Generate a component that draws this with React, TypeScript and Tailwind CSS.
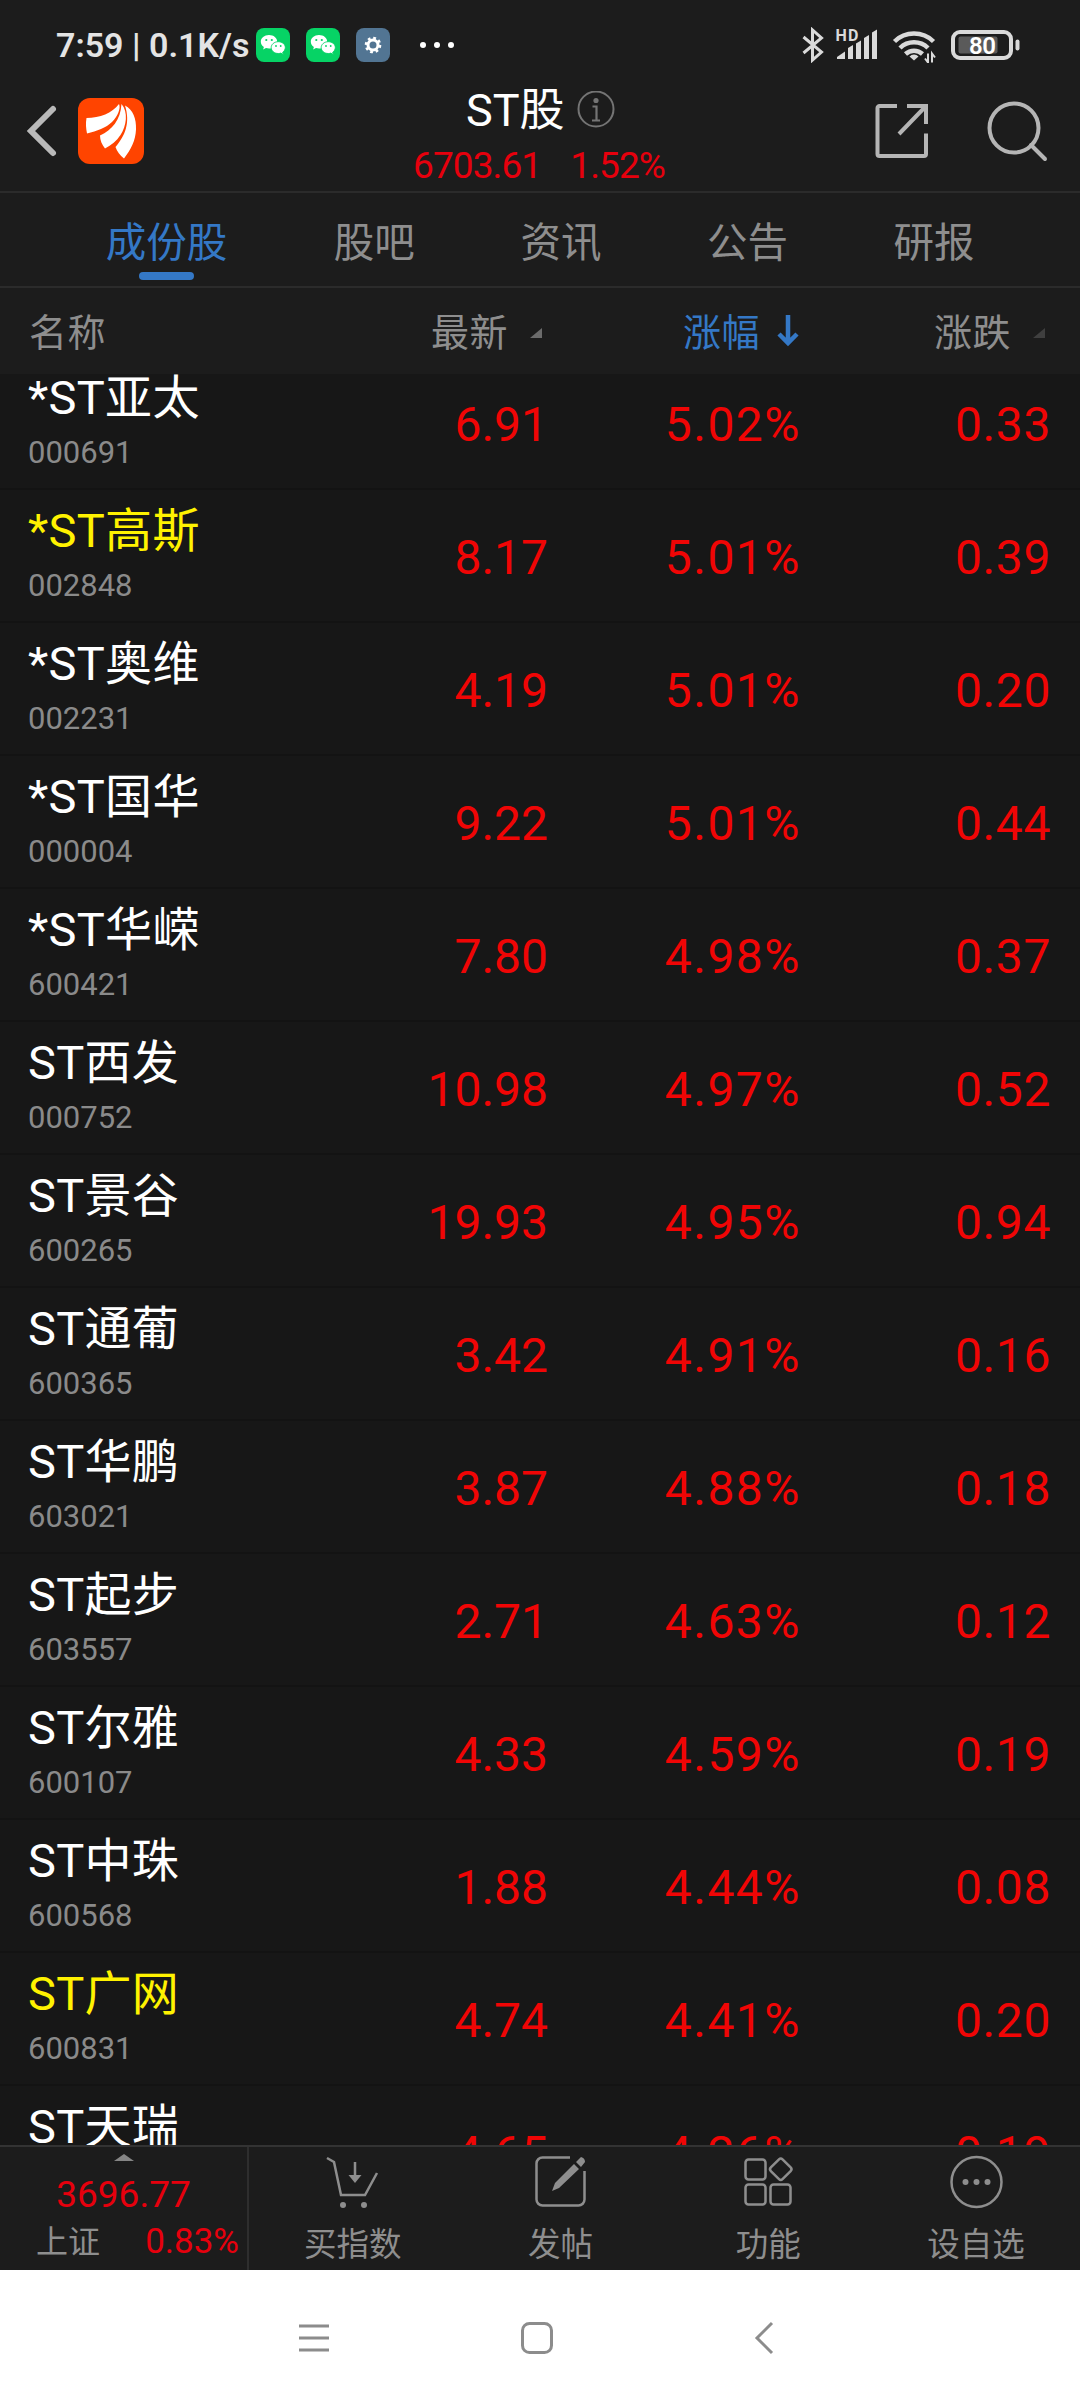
import type { ReactNode } from "react";

interface Stock {
  name: string;
  code: string;
  price: string;
  pct: string;
  change: string;
  starred?: boolean;
}

const STOCKS: Stock[] = [
  { name: "*ST亚太", code: "000691", price: "6.91", pct: "5.02%", change: "0.33" },
  { name: "*ST高斯", code: "002848", price: "8.17", pct: "5.01%", change: "0.39", starred: true },
  { name: "*ST奥维", code: "002231", price: "4.19", pct: "5.01%", change: "0.20" },
  { name: "*ST国华", code: "000004", price: "9.22", pct: "5.01%", change: "0.44" },
  { name: "*ST华嵘", code: "600421", price: "7.80", pct: "4.98%", change: "0.37" },
  { name: "ST西发", code: "000752", price: "10.98", pct: "4.97%", change: "0.52" },
  { name: "ST景谷", code: "600265", price: "19.93", pct: "4.95%", change: "0.94" },
  { name: "ST通葡", code: "600365", price: "3.42", pct: "4.91%", change: "0.16" },
  { name: "ST华鹏", code: "603021", price: "3.87", pct: "4.88%", change: "0.18" },
  { name: "ST起步", code: "603557", price: "2.71", pct: "4.63%", change: "0.12" },
  { name: "ST尔雅", code: "600107", price: "4.33", pct: "4.59%", change: "0.19" },
  { name: "ST中珠", code: "600568", price: "1.88", pct: "4.44%", change: "0.08" },
  { name: "ST广网", code: "600831", price: "4.74", pct: "4.41%", change: "0.20", starred: true },
  { name: "ST天瑞", code: "300165", price: "4.65", pct: "4.26%", change: "0.19" },
];

export default function App() {
  return (
    <div className="flex h-[2400px] w-[1080px] flex-col overflow-hidden bg-[#1c1c1c] font-['Roboto','Noto_Sans_CJK_SC',sans-serif] text-[#8e8e8e]">
      <StatusBar />
      <Header />
      <Tabs />
      <ColumnHeader />
      <main className="h-[1771px] shrink-0 overflow-hidden bg-[#171717]">
        <div className="-mt-[17px]">
          {STOCKS.map((stock) => (
            <StockRow key={stock.code} stock={stock} />
          ))}
        </div>
      </main>
      <BottomBar />
      <SystemNav />
    </div>
  );
}

function StatusBar() {
  return (
    <div className="flex h-[90px] shrink-0 items-center pl-[56px] text-[#e4e4e4]">
      <span className="w-[200px] whitespace-nowrap text-[34px] leading-none font-semibold">
        7:59 | 0.1K/s
      </span>
      <WeChatIcon />
      <WeChatIcon />
      <svg className="size-[34px]" viewBox="0 0 34 34">
        <rect width="34" height="34" rx="8" fill="#527593" />
        <circle cx="17" cy="17" r="5" fill="none" stroke="#fff" strokeWidth="3" />
        <circle cx="17" cy="17" r="7" fill="none" stroke="#fff" strokeWidth="2.6" strokeDasharray="2.75 2.75" />
      </svg>
      <svg className="ml-[30px] h-[6px] w-[34px]" viewBox="0 0 34 6" fill="#fff">
        <circle cx="3" cy="3" r="3" />
        <circle cx="17" cy="3" r="3" />
        <circle cx="31" cy="3" r="3" />
      </svg>

      {/* Bluetooth, mobile signal, wifi, battery */}
      <svg className="ml-[347px] h-[36px] w-[222px]" viewBox="0 0 222 36" fill="none">
        <path d="M2.500 10l18 15-9 8V3l9 8-18 15" stroke="#dadada" strokeWidth="3" />
        <text x="34.500" y="14" fontSize="16" fontWeight="700" fill="#dadada" textLength="23">HD</text>
        <g fill="#dadada">
          <path d="M36 32v-2l8-5.500v7.500z" />
          <path d="M47 32V21l5-3v14z" />
          <path d="M55 32V16.500l5-3V32z" />
          <path d="M63 32V11l5-3v24z" />
          <path d="M71 32V5.500l5-3V32z" />
        </g>
        <g stroke="#dadada" strokeWidth="4.500">
          <path d="M93.500 14.500a28 28 0 0 1 39 0" />
          <path d="M99 21a20 20 0 0 1 28 0" />
          <path d="M104.500 27a12.500 12.500 0 0 1 17 0" />
        </g>
        <path d="M113 33.500l-4.500-4a6 6 0 0 1 9 0z" fill="#dadada" />
        <path d="M127 26.500v9l-3-4M131 35.500v-9l3 4" stroke="#dadada" strokeWidth="2" />
        <rect x="152" y="5" width="58" height="26" rx="7" stroke="#dadada" strokeWidth="4" />
        <rect x="157.500" y="9.500" width="39" height="17" rx="2" fill="#5a5a5a" />
        <text x="168" y="26.500" fontSize="24" fontWeight="600" fill="#fff" textLength="27">80</text>
        <path d="M216.500 14.500v7" stroke="#dadada" strokeWidth="4" strokeLinecap="round" />
      </svg>
    </div>
  );
}

function WeChatIcon() {
  return (
    <svg className="mr-4 size-[34px]" viewBox="0 0 34 34">
      <rect width="34" height="34" rx="8" fill="#06d365" />
      <path d="M13 7c-4.700 0-8.200 3-8.200 6.700 0 2.200 1.200 4 3.100 5.300l-.8 2.600 2.900-1.600c1 .3 2 .5 3 .5 4.700 0 8.200-3 8.200-6.800S17.700 7 13 7z" fill="#fff" />
      <path d="M22.300 13.700c-4 0-7.100 2.600-7.100 5.900s3.100 5.900 7.100 5.900c.9 0 1.700-.1 2.500-.4l2.600 1.400-.7-2.300c1.600-1.100 2.600-2.700 2.600-4.600 0-3.300-3-5.900-7-5.900z" fill="#fff" stroke="#06d365" strokeWidth=".9" />
      <g fill="#06d365">
        <circle cx="10.300" cy="12" r="1.100" />
        <circle cx="15.800" cy="12" r="1.100" />
        <circle cx="20" cy="18" r=".9" />
        <circle cx="24.700" cy="18" r=".9" />
      </g>
    </svg>
  );
}

function Header() {
  return (
    <header className="flex h-[103px] shrink-0 border-b-2 border-[#2b2b2b]">
      <div className="flex w-[410px] items-start">
        <svg className="mt-[14px] ml-[26px] h-[54px] w-[32px]" viewBox="0 0 32 54" fill="none">
          <path d="M27 5L5 27l22 22" stroke="#b9b9b9" strokeWidth="6" strokeLinecap="round" />
        </svg>
        <svg className="mt-2 ml-[20px] size-[66px]" viewBox="0 0 66 66">
          <rect width="66" height="66" rx="12" fill="#ff4400" />
          <g fill="#fff">
            <path d="M8.500 20C22 20 34 15 41 6c2 4-1 12-7 18-6 6-15 9-25 11.500-1-5-1.500-10-.5-15.500z" />
            <path d="M22 37.500C34 32 42.500 22 43.500 6c7 8 5 22-1 31-4 6-9 10-15.500 13.500-3-4-5-8-5-13z" />
            <path d="M47 7.500c8 4 11.500 13 11 24-.5 11-5 20-12 29-4-3-7-7-8.500-11.500C47 38 52.500 25 47 7.500z" />
          </g>
        </svg>
      </div>

      <div className="w-[260px]">
        <div className="flex h-[40px] items-center pl-[56px] text-[45px] leading-none text-white">
          <span className="whitespace-nowrap">ST股</span>
          <svg className="ml-[12px] size-[38px]" viewBox="0 0 38 38" fill="none" stroke="#747474">
            <circle cx="19" cy="18" r="17.500" strokeWidth="2" />
            <path d="M15.500 15.500h4v14M15 29.500h8" strokeWidth="2.200" />
            <circle cx="19" cy="9.500" r="2.600" fill="#747474" stroke="none" />
          </svg>
        </div>
        <div className="mt-[17px] flex justify-between pr-[5px] pl-[3px] text-[37px] leading-none tracking-[-0.9px] text-[#e6000d]">
          <span>6703.61</span>
          <span>1.52%</span>
        </div>
      </div>

      <svg className="mt-[12px] ml-[204px] size-[56px]" viewBox="0 0 56 56" fill="none" stroke="#b5b5b5" strokeWidth="4">
        <path d="M23 4H5.500A2 2 0 0 0 3.500 6v46a2 2 0 0 0 2 2H50a2 2 0 0 0 2-2V31.500" />
        <path d="M33 4h19v18M52 4L25 32" />
      </svg>
      <svg className="mt-[11px] ml-[57px] size-[62px]" viewBox="0 0 62 62" fill="none" stroke="#b5b5b5" strokeWidth="4">
        <circle cx="27" cy="27" r="24.500" />
        <path d="M44 44l14 14" strokeLinecap="round" />
      </svg>
    </header>
  );
}

function Tabs() {
  const others = ["股吧", "资讯", "公告", "研报"];

  return (
    <nav className="flex h-[95px] shrink-0 border-b-2 border-[#2b2b2b] pl-[73px] text-[40.5px] leading-none">
      <div className="flex w-[187px] flex-col items-center pt-[30px] text-[#3478c6]">
        <span>成份股</span>
        <span className="mt-[8px] h-2 w-[55px] rounded-full bg-[#3478c6]" />
      </div>
      <div className="ml-[21px] flex pt-[30px]">
        {others.map((tab) => (
          <span key={tab} className="w-[186.600px] text-center">
            {tab}
          </span>
        ))}
      </div>
    </nav>
  );
}

function ColumnHeader() {
  return (
    <div className="flex h-[86px] shrink-0 items-center pt-[3px] text-[38px] leading-none tracking-[0.5px] whitespace-nowrap">
      <span className="w-[402px] pl-[29px]">名称</span>
      <span className="w-[110px] pl-[29px]">最新</span>
      <SortMark className="mr-[141px] ml-[18px] size-[12px] text-[#6b6b6b]" />
      <span className="text-[#3478c6]">涨幅</span>
      <svg className="mb-1 ml-[17px] h-[32px] w-[22px]" viewBox="0 0 22 32" fill="none" stroke="#3478c6" strokeWidth="4.500">
        <path d="M11 0v28M2 19l9 9 9-9" />
      </svg>
      <span className="ml-[135px]">涨跌</span>
      <SortMark className="ml-[22px] size-[12px] text-[#3f3f3f]" />
    </div>
  );
}

function SortMark({ className }: { className: string }) {
  return (
    <svg className={className} viewBox="0 0 12 12" fill="currentColor">
      <path d="M12 1v10H0z" />
    </svg>
  );
}

function StockRow({ stock }: { stock: Stock }) {
  return (
    <div className="flex h-[133px] items-center border-b-2 border-[#131313] pt-1 text-[48px] leading-none text-[#f00505]">
      <div className="w-[330px] self-start pt-[13px] pl-[28px]">
        <p
          className={`text-[47px] leading-[47px] tracking-[0.3px] whitespace-nowrap ${stock.starred ? "text-[#fff200]" : "text-white"}`}
        >
          {stock.name}
        </p>
        <p className="mt-[16px] text-[31px] leading-[31px] text-[#8a8a8a]">{stock.code}</p>
      </div>
      <span className="w-[218px] text-right">{stock.price}</span>
      <span className="w-[253px] text-right tracking-[1.5px]">{stock.pct}</span>
      <span className="w-[250px] text-right tracking-[0.6px]">{stock.change}</span>
    </div>
  );
}

function BottomBar() {
  return (
    <footer className="flex h-[125px] shrink-0 border-t-2 border-[#333]">
      <div className="flex w-[249px] flex-col items-center border-r-2 border-[#2e2e2e] text-[#e6000d]">
        <svg className="mt-[7px] h-[7px] w-[20px]" viewBox="0 0 20 7" fill="#858585">
          <path d="M10 0l10 7H0z" />
        </svg>
        <span className="mt-[15px] text-[37px] leading-[37px]">3696.77</span>
        <div className="mt-[11px] flex w-full items-center justify-between pr-[8px] pl-[36px] leading-[36px]">
          <span className="text-[32px] text-[#8e8e8e]">上证</span>
          <span className="text-[35px]">0.83%</span>
        </div>
      </div>

      <BottomItem label="买指数">
        <path d="M1 3l7 4 7 33h24l12-22M29 7v18" />
        <path d="M22.500 20h13L29 28z" fill="currentColor" stroke="none" />
        <circle cx="17" cy="50" r="3" fill="currentColor" stroke="none" />
        <circle cx="38" cy="50" r="3" fill="currentColor" stroke="none" />
      </BottomItem>
      <BottomItem label="发帖">
        <path d="M36 2.500H8.500a6 6 0 0 0-6 6v36a6 6 0 0 0 6 6h36a6 6 0 0 0 6-6V16" />
        <path d="M40 9l5 5-20 19-7 3 3-8zM42 7l5-5q4 1 4 5l-4 5z" fill="currentColor" stroke="none" />
      </BottomItem>
      <BottomItem label="功能">
        <rect x="3.500" y="4.500" width="20" height="20" rx="3" />
        <rect x="3.500" y="29.500" width="20" height="20" rx="3" />
        <rect x="28.500" y="29.500" width="20" height="20" rx="3" />
        <rect x="30.500" y="6" width="16.500" height="16.500" rx="2.500" transform="rotate(45 38.750 14.250)" />
      </BottomItem>
      <BottomItem label="设自选">
        <circle cx="26.500" cy="27" r="25" />
        <circle cx="15.500" cy="27" r="3" fill="currentColor" stroke="none" />
        <circle cx="26.500" cy="27" r="3" fill="currentColor" stroke="none" />
        <circle cx="37.500" cy="27" r="3" fill="currentColor" stroke="none" />
      </BottomItem>
    </footer>
  );
}

function BottomItem({ label, children }: { label: string; children: ReactNode }) {
  return (
    <div className="flex flex-1 flex-col items-center pt-[8px]">
      <svg className="h-[54px] w-[53px]" viewBox="0 0 53 54" fill="none" stroke="currentColor" strokeWidth="2.500">
        {children}
      </svg>
      <span className="mt-[20px] text-[32.500px] leading-[33px]">{label}</span>
    </div>
  );
}

function SystemNav() {
  return (
    <div className="flex h-[130px] shrink-0 items-center bg-white pt-[5px]">
      <svg className="ml-[298px] size-[32px]" viewBox="0 0 32 32" fill="none" stroke="#8c8c8c" strokeWidth="3">
        <path d="M1 4h30M1 16h30M1 28h30" />
      </svg>
      <svg className="ml-[190px] size-[34px]" viewBox="0 0 34 34" fill="none" stroke="#8c8c8c" strokeWidth="3">
        <rect x="2.500" y="2.500" width="29" height="29" rx="7" />
      </svg>
      <svg className="ml-[200px] h-[34px] w-[20px]" viewBox="0 0 20 34" fill="none" stroke="#8c8c8c" strokeWidth="3">
        <path d="M18 2L3 17l15 15" />
      </svg>
    </div>
  );
}
